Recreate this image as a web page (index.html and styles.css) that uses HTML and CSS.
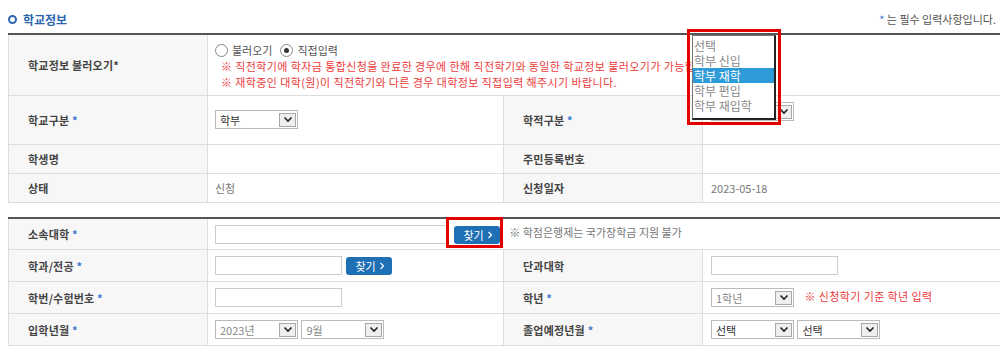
FILE: index.html
```html
<!DOCTYPE html>
<html>
<head>
    <title>학교정보</title>
    <link rel="stylesheet" href="styles.css">
</head>
<body>
<div class="wrap">
    <div class="head">
        <h2 class="title"><span class="ring"></span>학교정보</h2>
        <p class="must"><span class="star">*</span> 는 필수 입력사항입니다.</p>
    </div>

    <table class="form first">
        <colgroup>
            <col class="c-lbl"><col class="c-val"><col class="c-lbl"><col class="c-val2">
        </colgroup>
        <tr class="r-load">
            <th>학교정보 불러오기*</th>
            <td colspan="3" class="load">
                <div class="radios">
                    <label><input type="radio" name="load"> 불러오기</label>
                    <label><input type="radio" name="load" checked> 직접입력</label>
                </div>
                <p class="warn">※ 직전학기에 학자금 통합신청을 완료한 경우에 한해 직전학기와 동일한 학교정보 불러오기가 가능합니다.</p>
                <p class="warn">※ 재학중인 대학(원)이 직전학기와 다른 경우 대학정보 직접입력 해주시기 바랍니다.</p>
            </td>
        </tr>
        <tr class="r-kind">
            <th>학교구분 <span class="star">*</span></th>
            <td>
                <span class="sel"><span>학부</span><span class="arr"><svg width="10" height="7" viewBox="0 0 10 7"><polyline points="1.5,1.5 5,5 8.5,1.5" fill="none" stroke="#222" stroke-width="1.6"/></svg></span></span>
            </td>
            <th>학적구분 <span class="star">*</span></th>
            <td class="top">
                <!-- covered by the open list below -->
                <span class="sel"><span></span><span class="arr"><svg width="10" height="7" viewBox="0 0 10 7"><polyline points="1.5,1.5 5,5 8.5,1.5" fill="none" stroke="#222" stroke-width="1.6"/></svg></span></span>
            </td>
        </tr>
        <tr class="r-line">
            <th>학생명</th>
            <td></td>
            <th>주민등록번호</th>
            <td></td>
        </tr>
        <tr class="r-line">
            <th>상태</th>
            <td class="plain">신청</td>
            <th>신청일자</th>
            <td class="plain">2023-05-18</td>
        </tr>
    </table>

    <table class="form second">
        <colgroup>
            <col class="c-lbl"><col class="c-val"><col class="c-lbl"><col class="c-val2">
        </colgroup>
        <tr>
            <th>소속대학 <span class="star">*</span></th>
            <td colspan="3">
                <input type="text" class="txt wide">
                <span class="mark"><button type="button" class="btn">찾기<svg width="6" height="8" viewBox="0 0 6 8"><polyline points="1.5,1 4.5,4 1.5,7" fill="none" stroke="#fff" stroke-width="1.2"/></svg></button></span>
                <span class="note">※ 학점은행제는 국가장학금 지원 불가</span>
            </td>
        </tr>
        <tr>
            <th>학과/전공 <span class="star">*</span></th>
            <td>
                <input type="text" class="txt">
                <button type="button" class="btn">찾기<svg width="6" height="8" viewBox="0 0 6 8"><polyline points="1.5,1 4.5,4 1.5,7" fill="none" stroke="#fff" stroke-width="1.2"/></svg></button>
            </td>
            <th>단과대학</th>
            <td><input type="text" class="txt"></td>
        </tr>
        <tr>
            <th>학번/수험번호 <span class="star">*</span></th>
            <td><input type="text" class="txt"></td>
            <th>학년 <span class="star">*</span></th>
            <td>
                <span class="sel dim"><span>1학년</span><span class="arr"><svg width="10" height="7" viewBox="0 0 10 7"><polyline points="1.5,1.5 5,5 8.5,1.5" fill="none" stroke="#222" stroke-width="1.6"/></svg></span></span>
                <span class="warn inline">※ 신청학기 기준 학년 입력</span>
            </td>
        </tr>
        <tr>
            <th>입학년월 <span class="star">*</span></th>
            <td>
                <span class="sel dim"><span>2023년</span><span class="arr"><svg width="10" height="7" viewBox="0 0 10 7"><polyline points="1.5,1.5 5,5 8.5,1.5" fill="none" stroke="#222" stroke-width="1.6"/></svg></span></span>
                <span class="sel dim"><span>9월</span><span class="arr"><svg width="10" height="7" viewBox="0 0 10 7"><polyline points="1.5,1.5 5,5 8.5,1.5" fill="none" stroke="#222" stroke-width="1.6"/></svg></span></span>
            </td>
            <th>졸업예정년월 <span class="star">*</span></th>
            <td>
                <span class="sel"><span>선택</span><span class="arr"><svg width="10" height="7" viewBox="0 0 10 7"><polyline points="1.5,1.5 5,5 8.5,1.5" fill="none" stroke="#222" stroke-width="1.6"/></svg></span></span>
                <span class="sel"><span>선택</span><span class="arr"><svg width="10" height="7" viewBox="0 0 10 7"><polyline points="1.5,1.5 5,5 8.5,1.5" fill="none" stroke="#222" stroke-width="1.6"/></svg></span></span>
            </td>
        </tr>
    </table>

    <!-- opened dropdown of 학적구분 -->
    <div class="popup">
        <ul class="listbox">
            <li>선택</li>
            <li>학부 신입</li>
            <li class="on">학부 재학</li>
            <li>학부 편입</li>
            <li>학부 재입학</li>
        </ul>
    </div>
</div>
</body>
</html>
```

FILE: styles.css
```css
body { margin: 0; font-family: "Noto Sans CJK KR", sans-serif; font-size: 11px; color: #444; background: #fff; }
.wrap { position: relative; margin-left: 8px; width: 992px; }

.head { display: flex; justify-content: space-between; align-items: center; height: 24px; padding-top: 7px; margin-bottom: 2px; }
.title { display: flex; align-items: center; margin: 0; font-size: 12px; font-weight: bold; color: #2b67ad; }
.ring { width: 5px; height: 5px; border: 2px solid #2b67ad; border-radius: 50%; margin-right: 6px; }
.must { margin: 0 4px 0 0; color: #555; }
.star { color: #3a78d0; }

.form { width: 992px; border-collapse: collapse; table-layout: fixed; border-top: 2px solid #555; }
.form col.c-lbl { width: 199px; }
.form col.c-val { width: 296px; }
.form col.c-val2 { width: 298px; }
.form th, .form td { border-bottom: 1px solid #ddd; border-left: 1px solid #ddd; padding: 0; vertical-align: middle; }
.form th { background: #f7f7f7; text-align: left; padding-left: 19px; font-weight: bold; color: #444; letter-spacing: 0.2px; }
.form td { padding-left: 7px; }
.form td + th + td { padding-left: 8px; }
.form .plain { color: #777; }
.form .top { vertical-align: top; padding-top: 6px; }
.form .load { padding-top: 3px; }

.first .r-load { height: 61px; }
.first .r-kind { height: 49px; }
.first .r-line { height: 29px; }
.second { margin-top: 14px; }
.second tr { height: 32px; }

.radios { display: flex; gap: 8px; line-height: 16px; color: #555; }
.radios label { display: flex; align-items: center; gap: 4px; }
.radios input { appearance: none; margin: 0; width: 13px; height: 13px; border: 1px solid #888; border-radius: 50%; background: #fff; display: grid; place-items: center; }
.radios input:checked::after { content: ""; width: 5px; height: 5px; border-radius: 50%; background: #333; }
.warn { margin: 0; padding-left: 6px; line-height: 16px; color: #ec3b3b; white-space: nowrap; letter-spacing: 0.4px; }
.warn.inline { padding-left: 8px; }

.sel { display: inline-flex; align-items: center; justify-content: space-between; box-sizing: border-box; width: 83px; height: 19px; padding: 0 1px 0 4px; border: 1px solid #bbb; background: #fff; color: #333; vertical-align: middle; }
.sel + .sel { margin-left: 1px; }
.sel.dim { color: #888; }
.arr { display: flex; align-items: center; justify-content: center; box-sizing: border-box; width: 17px; height: 14px; border: 1px solid #a8a8a8; background: #eee; }

.txt { box-sizing: border-box; width: 127px; height: 19px; margin: 0; border: 1px solid #ccc; vertical-align: middle; }
.txt.wide { width: 233px; }
.btn { display: inline-flex; align-items: center; gap: 3px; box-sizing: border-box; height: 18px; padding: 0 7px 0 9px; margin-left: 2px; border: none; border-radius: 3px; background: #1f6fb5; color: #fff; font: inherit; vertical-align: middle; }
.mark { position: relative; display: inline-block; vertical-align: middle; margin-left: 2px; }
.mark::after { content: ""; position: absolute; left: -6px; right: -3px; top: -7px; bottom: -4px; border: 3px solid #e50000; }
.note { margin-left: 7px; color: #777; }

.popup { position: absolute; left: 679px; top: 29px; width: 84px; height: 85px; padding: 3px 2px 2px 2px; border: 3px solid #e50000; }
.listbox { list-style: none; margin: 0; padding: 2px 0 1px; height: 100%; box-sizing: border-box; border: 1px solid #777; border-right: 2px solid #222; border-bottom: 2px solid #222; background: #fff; }
.listbox li { height: 15px; line-height: 15px; padding-left: 1px; color: #888; font-size: 12px; }
.listbox li.on { background: #2e9bd9; color: #fff; }
```
